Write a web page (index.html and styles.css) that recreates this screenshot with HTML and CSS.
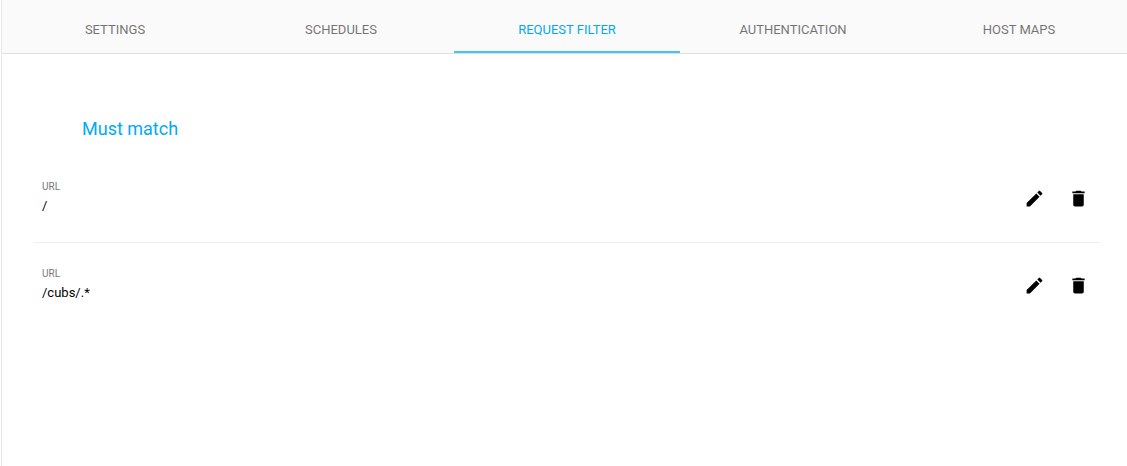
FILE: index.html
```html
<!DOCTYPE html>
<html lang="en">
<head>
<meta charset="UTF-8">
<title>Request filter</title>
<link rel="stylesheet" href="styles.css">
</head>
<body>
<div class="panel">
    <div class="tabs">
        <div class="tab">SETTINGS</div>
        <div class="tab">SCHEDULES</div>
        <div class="tab active">REQUEST FILTER</div>
        <div class="tab">AUTHENTICATION</div>
        <div class="tab">HOST MAPS</div>
    </div>
    <h2 class="section-title">Must match</h2>
    <div class="rule-list">
        <div class="rule">
            <div class="rule-text">
                <div class="rule-label">URL</div>
                <div class="rule-value">/</div>
            </div>
            <div class="rule-actions">
                <svg class="icon" viewBox="0 0 24 24"><path d="M3 17.25V21h3.75L17.81 9.94l-3.75-3.75L3 17.25zM20.71 7.04a1 1 0 0 0 0-1.41l-2.34-2.34a1 1 0 0 0-1.41 0l-1.83 1.83 3.75 3.75 1.83-1.83z"/></svg>
                <svg class="icon" viewBox="0 0 24 24"><path d="M6 19c0 1.1.9 2 2 2h8c1.1 0 2-.9 2-2V7H6v12zM19 4h-3.5l-1-1h-5l-1 1H5v2h14V4z"/></svg>
            </div>
        </div>
        <div class="rule">
            <div class="rule-text">
                <div class="rule-label">URL</div>
                <div class="rule-value">/cubs/.*</div>
            </div>
            <div class="rule-actions">
                <svg class="icon" viewBox="0 0 24 24"><path d="M3 17.25V21h3.75L17.81 9.94l-3.75-3.75L3 17.25zM20.71 7.04a1 1 0 0 0 0-1.41l-2.34-2.34a1 1 0 0 0-1.41 0l-1.83 1.83 3.75 3.75 1.83-1.83z"/></svg>
                <svg class="icon" viewBox="0 0 24 24"><path d="M6 19c0 1.1.9 2 2 2h8c1.1 0 2-.9 2-2V7H6v12zM19 4h-3.5l-1-1h-5l-1 1H5v2h14V4z"/></svg>
            </div>
        </div>
    </div>
</div>
</body>
</html>
```

FILE: styles.css
```css
html, body {
    margin: 0;
    padding: 0;
    height: 100%;
    overflow: hidden;
    background-color: #fff;
}
body {
    font-family: Roboto, "Liberation Sans", sans-serif;
    color: #000;
    padding-left: 1px;
    box-sizing: border-box;
}
.panel {
    height: 100%;
    border-left: 1px solid #e8e8e8;
}
.tabs {
    display: flex;
    width: 1130px;
    height: 54px;
    box-sizing: border-box;
    background-color: #fafafa;
    border-bottom: 1px solid #e0e0e0;
}
.tab {
    flex: 0 0 226px;
    height: 53px;
    box-sizing: border-box;
    padding-top: 22px;
    text-align: center;
    font-size: 13px;
    line-height: 15px;
    color: #000;
    opacity: 0.54;
}
.tab.active {
    color: #03a9f4;
    opacity: 1;
    border-bottom: 2px solid #40c4ff;
}
.section-title {
    margin: 0;
    padding: 64px 0 0 80px;
    font-size: 18px;
    line-height: 22px;
    font-weight: 400;
    color: #03a9f4;
}
.rule-list {
    width: 1066px;
    margin: 16px 0 0 32px;
}
.rule {
    display: flex;
    justify-content: space-between;
    height: 87px;
    box-sizing: border-box;
    padding: 25px 0 0 8px;
    border-bottom: 1px solid #eee;
}
.rule:last-child {
    border-bottom: none;
}
.rule-text {
    opacity: 0.99;
}
.rule-label {
    font-size: 10px;
    line-height: 12px;
    color: #757575;
}
.rule-value {
    margin-top: 5px;
    font-size: 13px;
    line-height: 16px;
}
.rule-actions {
    display: flex;
    gap: 23px;
    padding: 7px 11px 0 0;
}
.icon {
    width: 21px;
    height: 21px;
    fill: #000;
}
```
